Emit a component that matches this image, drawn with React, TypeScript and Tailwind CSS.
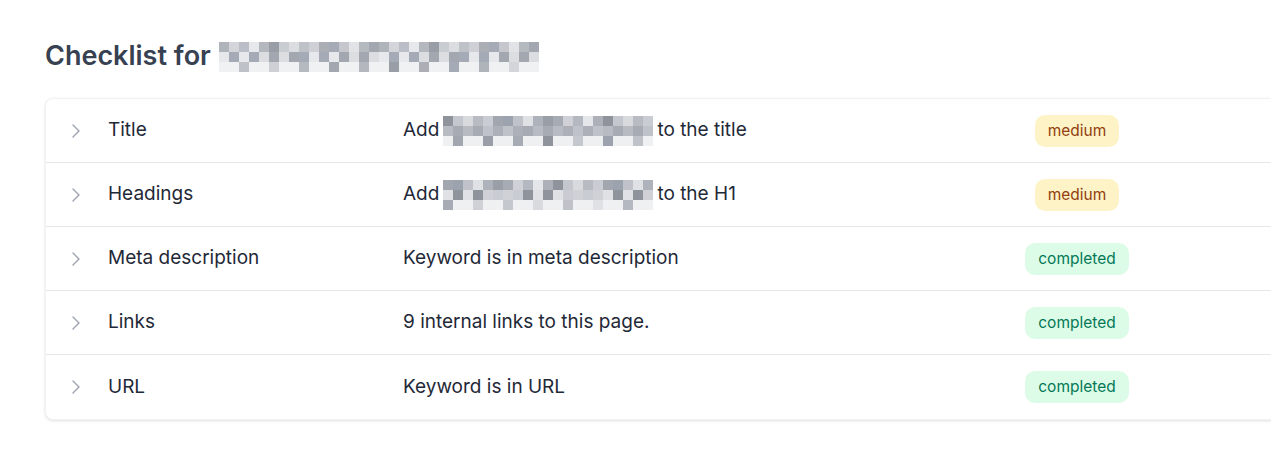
import { ChevronRight } from "lucide-react";

type Status = "medium" | "completed";

interface Row {
  name: string;
  before?: string;
  blurred?: boolean;
  after: string;
  status: Status;
}

const rows: Row[] = [
  { name: "Title", before: "Add", blurred: true, after: "to the title", status: "medium" },
  { name: "Headings", before: "Add", blurred: true, after: "to the H1", status: "medium" },
  { name: "Meta description", after: "Keyword is in meta description", status: "completed" },
  { name: "Links", after: "9 internal links to this page.", status: "completed" },
  { name: "URL", after: "Keyword is in URL", status: "completed" },
];

// shades for the pixelated (redacted) keyword
const shades = [
  "#9ca3af", "#b4b8c0", "#c9ccd2", "#a7abb3", "#d8dade", "#aeb2ba", "#8f939c", "#bfc2c8",
  "#e4e6e9", "#a2a6ae", "#cfd1d6", "#b8bbc2", "#9a9ea7", "#c4c7cd", "#dfe1e4", "#adb0b8",
];

function Mosaic({ cols, rows: r, cell, seed }: { cols: number; rows: number; cell: number; seed: number }) {
  const cells = [];
  for (let y = 0; y < r; y++) {
    for (let x = 0; x < cols; x++) {
      const i = (x * 7 + y * 5 + seed * 3 + ((x * y) % 4)) % shades.length;
      const faded = y === r - 1 && (x + seed) % 3 !== 0;
      cells.push(
        <div
          key={`${x}-${y}`}
          style={{ width: cell, height: cell, background: faded ? "#eef0f2" : shades[i] }}
        />
      );
    }
  }
  return (
    <span
      className="inline-grid align-middle"
      style={{ gridTemplateColumns: `repeat(${cols}, ${cell}px)` }}
    >
      {cells}
    </span>
  );
}

function Badge({ status }: { status: Status }) {
  if (status === "medium") {
    return (
      <span className="inline-flex h-8 items-center rounded-[10px] bg-[#fef3c7] px-[13px] text-[15.5px] text-[#92400e]">
        medium
      </span>
    );
  }
  return (
    <span className="inline-flex h-8 items-center rounded-[10px] bg-[#dcfce7] px-[13px] text-[15.5px] text-[#047857]">
      completed
    </span>
  );
}

export default function App() {
  return (
    <div
      className="min-h-screen w-full overflow-hidden bg-white pl-[45px] pt-[38px] text-[#1f2937]"
      style={{ fontFamily: "Inter, 'Noto Sans', sans-serif" }}
    >
      <h1 className="flex h-9 items-center text-[27px] font-semibold text-[#374151]">
        <span>Checklist for</span>
        <span className="ml-[8px] opacity-90">
          <Mosaic cols={32} rows={3} cell={10} seed={1} />
        </span>
      </h1>

      <div className="mt-6 w-[1320px] rounded-lg border border-[#f1f2f4] bg-white shadow-[0_1px_3px_rgba(0,0,0,0.12)]">
        {rows.map((row, idx) => (
          <div
            key={row.name}
            className={`grid h-16 grid-cols-[62px_295px_560px_228px_1fr] items-center ${
              idx < rows.length - 1 ? "border-b border-[#e5e7eb]" : ""
            }`}
          >
            <div className="flex pl-[18px]">
              <ChevronRight size={24} strokeWidth={1.4} className="text-[#9ca3af]" />
            </div>
            <div className="text-[19px]">{row.name}</div>
            <div className="flex items-center text-[19px]">
              {row.before && <span>{row.before}</span>}
              {row.blurred && (
                <span className="mx-[4px]">
                  <Mosaic cols={21} rows={3} cell={10} seed={idx + 2} />
                </span>
              )}
              <span>{row.after}</span>
            </div>
            <div className="flex justify-center">
              <Badge status={row.status} />
            </div>
            <div />
          </div>
        ))}
      </div>
    </div>
  );
}
